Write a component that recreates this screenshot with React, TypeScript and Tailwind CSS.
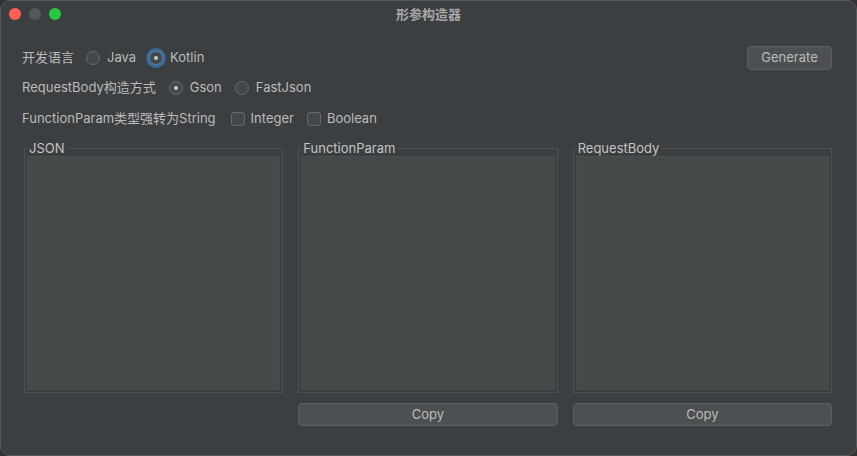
const font = { fontFamily: 'Inter, "Noto Sans CJK SC", sans-serif' };

const Radio = ({ label, checked, focused }: { label: string; checked?: boolean; focused?: boolean }) => {
  return (
    <div className="flex items-center gap-[7px]">
      <span
        className={
          focused
            ? "flex size-[14px] items-center justify-center rounded-full border border-[#5a7fa5] bg-[#43494a] ring-[3px] ring-[#3b6a96]"
            : "flex size-[14px] items-center justify-center rounded-full border border-[#666a6c] bg-[#43494a]"
        }
      >
        {checked && <span className="size-[4px] rounded-full bg-[#c8c8c8]" />}
      </span>
      <span>{label}</span>
    </div>
  );
};

const Check = ({ label }: { label: string }) => {
  return (
    <div className="flex items-center gap-[6px]">
      <span className="size-[14px] rounded-[3px] border border-[#666a6c] bg-[#43494a]" />
      <span>{label}</span>
    </div>
  );
};

const Panel = ({ title }: { title: string }) => {
  return (
    <fieldset className="min-w-0 h-[252px] border border-[#4d5052] px-[2px] pb-[2px] flex flex-col">
      <legend className="px-[2px] text-[13px] leading-[15px] text-[#c4c4c4]">{title}</legend>
      <div className="h-full w-full bg-[#45494a] border border-[#4a4e4f]" />
    </fieldset>
  );
};

export default function App() {
  return (
    <div className="w-[857px] h-[456px] bg-[#2f3133]" style={font}>
      <div className="w-full h-full rounded-[10px] border border-[#55585b] bg-[#3c3f41] overflow-hidden flex flex-col text-[13px] text-[#bbbbbb]">
        {/* title bar */}
        <div className="relative h-[27px] flex items-center justify-center shrink-0">
          <div className="absolute left-[8px] top-[7px] flex gap-[8px]">
            <span className="size-[12px] rounded-full bg-[#fe5f57]" />
            <span className="size-[12px] rounded-full bg-[#54575b]" />
            <span className="size-[12px] rounded-full bg-[#29c73f]" />
          </div>
          <span className="font-bold text-[13px] text-[#a8a8a8]">形参构造器</span>
        </div>

        <div className="flex flex-col pt-[18px] pl-[21px] pr-[24px]">
          <div className="flex items-center h-[24px]">
            <span>开发语言</span>
            <div className="ml-[12px] flex items-center gap-[13px]">
              <Radio label="Java" />
              <Radio label="Kotlin" checked focused />
            </div>
            <button className="ml-auto h-[24px] w-[85px] rounded-[4px] border border-[#5b5f61] bg-[#4c5052] text-[13px] text-[#bbbbbb]">
              Generate
            </button>
          </div>

          <div className="flex items-center h-[24px] mt-[6px]">
            <span>RequestBody构造方式</span>
            <div className="ml-[13px] flex items-center gap-[13px]">
              <Radio label="Gson" checked />
              <Radio label="FastJson" />
            </div>
          </div>

          <div className="flex items-center h-[24px] mt-[7px]">
            <span>FunctionParam类型强转为String</span>
            <div className="ml-[15px] flex items-center gap-[13px]">
              <Check label="Integer" />
              <Check label="Boolean" />
            </div>
          </div>

          <div className="grid grid-cols-3 gap-x-[15px] mt-[10px] pl-[2px]">
            <Panel title="JSON" />
            <Panel title="FunctionParam" />
            <Panel title="RequestBody" />
            <div />
            <button className="mt-[10px] h-[23px] rounded-[4px] border border-[#5b5f61] bg-[#4c5052] text-[13px] text-[#bbbbbb]">
              Copy
            </button>
            <button className="mt-[10px] h-[23px] rounded-[4px] border border-[#5b5f61] bg-[#4c5052] text-[13px] text-[#bbbbbb]">
              Copy
            </button>
          </div>
        </div>
      </div>
    </div>
  );
}
